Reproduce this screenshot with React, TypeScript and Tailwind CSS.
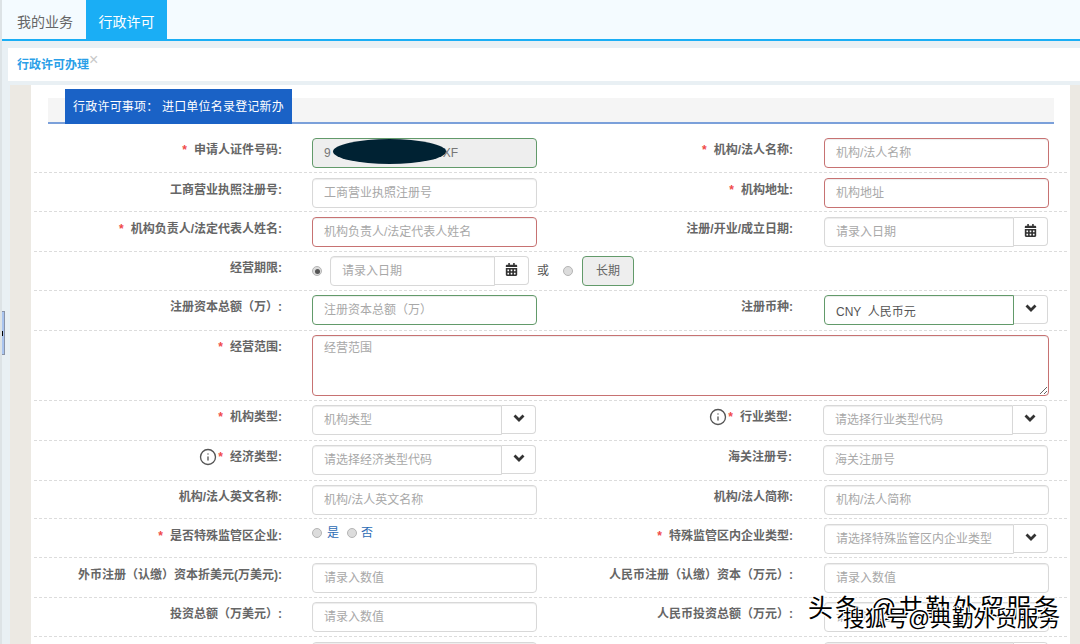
// App.tsx
import { FaCalendarAlt } from "react-icons/fa";
import { Info } from "lucide-react";

type Tone = "plain" | "red" | "green";

const toneClass: Record<Tone, string> = {
    plain: "border-[#d8d8d8]",
    red: "border-[#c77272]",
    green: "border-[#629a6a]",
};

function Star() {
    return <span className="mr-[7px] text-[#f04a4a]">*</span>;
}

function Radio({ checked = false }: { checked?: boolean }) {
    return (
        <span className="flex h-[10px] w-[10px] shrink-0 items-center justify-center rounded-full border border-[#b5b5b5] bg-[#dcdcdc]">
            {checked && <span className="h-[5px] w-[5px] rounded-full bg-[#555]" />}
        </span>
    );
}

function Chevron() {
    return (
        <svg width="12" height="8" viewBox="0 0 12 8" className="mb-[4px]">
            <polyline points="1.5,1.5 6,6 10.5,1.5" fill="none" stroke="#333" strokeWidth="2.8" />
        </svg>
    );
}

function Label({ text, required, info, className }: { text: string; required?: boolean; info?: boolean; className: string }) {
    return (
        <div className={`mt-[3px] flex h-[18px] shrink-0 items-center justify-end text-[12px] leading-[18px] font-bold whitespace-nowrap text-[#666] ${className}`}>
            {info && <Info size={18} strokeWidth={1.8} className="mr-[1px] text-[#555]" />}
            {required && <Star />}
            <span>{text}</span>
        </div>
    );
}

function TextInput({ placeholder, tone = "plain", className = "w-[225px]" }: { placeholder: string; tone?: Tone; className?: string }) {
    return (
        <input
            readOnly
            placeholder={placeholder}
            className={`h-[30px] shrink-0 rounded-[4px] border bg-white px-[11px] text-[12px] shadow-[inset_0_1px_1px_rgba(0,0,0,0.075)] outline-none placeholder:text-[#a8a8a8] ${toneClass[tone]} ${className}`}
        />
    );
}

function AddonInput({ placeholder, value, tone = "plain", kind, className = "w-[190px]" }: {
    placeholder: string;
    value?: string;
    tone?: Tone;
    kind: "date" | "select";
    className?: string;
}) {
    return (
        <div className="flex shrink-0 items-start">
            <input
                readOnly
                placeholder={placeholder}
                value={value}
                className={`h-[30px] rounded-l-[4px] border bg-white px-[11px] text-[12px] text-[#555] shadow-[inset_0_1px_1px_rgba(0,0,0,0.075)] outline-none placeholder:text-[#a8a8a8] ${toneClass[tone]} ${className}`}
            />
            <span className="flex h-[29px] w-[34px] items-center justify-center rounded-r-[4px] border border-l-0 border-[#d8d8d8] bg-white text-[#333]">
                {kind === "date" ? <FaCalendarAlt size={13} className="mb-[2px]" /> : <Chevron />}
            </span>
        </div>
    );
}

function Row({ className, children }: { className: string; children: React.ReactNode }) {
    return <div className={`flex items-start border-b border-dashed border-[#dcdcdc] ${className}`}>{children}</div>;
}

const left = "w-[248px]";
const right = "w-[256px]";
const gapLeft = <span className="w-[30px] shrink-0" />;
const gapRight = <span className="w-[31px] shrink-0" />;

export default function App() {
    return (
        <div className="relative h-[644px] w-[1080px] overflow-hidden border-l-2 border-[#dde3e6] bg-[#e9f0f4] font-['Liberation_Sans','Noto_Sans_CJK_SC',sans-serif]">
            {/* top nav */}
            <div className="-ml-[2px] flex h-[41px] border-b-2 border-[#1aaef5] bg-[#f4fbff] text-[14px]">
                <div className="flex w-[86px] items-center justify-center pt-[6px] pl-[4px] text-[#666]">我的业务</div>
                <div className="flex w-[81px] items-center justify-center bg-[#1aaef5] pt-[6px] text-white">行政许可</div>
            </div>

            {/* page tab */}
            <div className="mt-[7px] ml-[6px] flex h-[33px] items-center bg-white pl-[9px]">
                <span className="text-[12px] font-bold text-[#2a9fe8]">行政许可办理</span>
                <span className="mb-[10px] text-[16px] leading-none text-[#c8c8c8]">×</span>
            </div>

            <div className="mt-[4px] ml-[8px] flex h-[600px]">
                <div className="w-[21px] shrink-0 bg-[#ece9e3]" />
                <div className="w-[1039px] shrink-0 bg-white px-[3px]">
                    {/* section header */}
                    <div className="mr-[13px] ml-[14px] flex h-[39px] items-end">
                        <div className="h-[26px] w-full border-b-2 border-[#7ba0da] bg-[#f5f5f5] pl-[17px]">
                            <div className="-mt-[9px] flex h-[35px] w-[227px] items-center justify-center bg-[#1a62c6] text-[12px] tracking-[0.2px] whitespace-nowrap text-white">
                                行政许可事项： 进口单位名录登记新办
                            </div>
                        </div>
                    </div>

                    <div className="mt-[9px]">
                        <Row className="h-[40px] pt-[5px]">
                            <Label text="申请人证件号码:" required className={left} />
                            {gapLeft}
                            <div className="relative flex h-[30px] w-[225px] shrink-0 items-center justify-between rounded-[4px] border border-[#629a6a] bg-[#eeeeee] px-[11px] text-[12px] text-[#777]">
                                <span>9</span>
                                <span className="mr-[67px]">XF</span>
                                <span className="absolute top-0 left-[20px] h-[25px] w-[113px] rounded-[50%] bg-[#002233]" />
                            </div>
                            <Label text="机构/法人名称:" required className={right} />
                            {gapRight}
                            <TextInput placeholder="机构/法人名称" tone="red" />
                        </Row>
                        <Row className="h-[39px] pt-[5px]">
                            <Label text="工商营业执照注册号:" className={left} />
                            {gapLeft}
                            <TextInput placeholder="工商营业执照注册号" />
                            <Label text="机构地址:" required className={right} />
                            {gapRight}
                            <TextInput placeholder="机构地址" tone="red" />
                        </Row>
                        <Row className="h-[40px] pt-[5px]">
                            <Label text="机构负责人/法定代表人姓名:" required className={left} />
                            {gapLeft}
                            <TextInput placeholder="机构负责人/法定代表人姓名" tone="red" />
                            <Label text="注册/开业/成立日期:" className={right} />
                            {gapRight}
                            <AddonInput placeholder="请录入日期" kind="date" />
                        </Row>
                        <Row className="h-[39px] pt-[4px]">
                            <Label text="经营期限:" className={left} />
                            {gapLeft}
                            <div className="flex h-[30px] items-center">
                                <Radio checked />
                                <span className="w-[8px]" />
                                <AddonInput placeholder="请录入日期" kind="date" className="w-[165px]" />
                                <span className="mr-[14px] ml-[8px] text-[12px] text-[#555]">或</span>
                                <Radio />
                                <span className="ml-[9px] flex h-[30px] w-[52px] items-center justify-center rounded-[4px] border border-[#629a6a] bg-[#eeeeee] text-[12px] text-[#666]">长期</span>
                            </div>
                        </Row>
                        <Row className="h-[40px] pt-[4px]">
                            <Label text="注册资本总额（万）:" className={left} />
                            {gapLeft}
                            <TextInput placeholder="注册资本总额（万）" tone="green" />
                            <Label text="注册币种:" className={right} />
                            {gapRight}
                            <AddonInput placeholder="" value="CNY  人民币元" tone="green" kind="select" />
                        </Row>
                        <Row className="h-[70px] pt-[4px]">
                            <Label text="经营范围:" required className={left} />
                            {gapLeft}
                            <textarea
                                readOnly
                                placeholder="经营范围"
                                className="h-[61px] w-[737px] shrink-0 rounded-[4px] border border-[#c77272] bg-white px-[11px] py-[3px] text-[12px] shadow-[inset_0_1px_1px_rgba(0,0,0,0.075)] outline-none placeholder:text-[#a8a8a8]"
                            />
                        </Row>
                        <Row className="h-[40px] pt-[4px]">
                            <Label text="机构类型:" required className={left} />
                            {gapLeft}
                            <AddonInput placeholder="机构类型" kind="select" />
                            <Label text="行业类型:" required info className={right} />
                            {gapRight}
                            <AddonInput placeholder="请选择行业类型代码" kind="select" />
                        </Row>
                        <Row className="h-[40px] pt-[4px]">
                            <Label text="经济类型:" required info className={left} />
                            {gapLeft}
                            <AddonInput placeholder="请选择经济类型代码" kind="select" />
                            <Label text="海关注册号:" className={right} />
                            {gapRight}
                            <TextInput placeholder="海关注册号" />
                        </Row>
                        <Row className="h-[38px] pt-[4px]">
                            <Label text="机构/法人英文名称:" className={left} />
                            {gapLeft}
                            <TextInput placeholder="机构/法人英文名称" />
                            <Label text="机构/法人简称:" className={right} />
                            {gapRight}
                            <TextInput placeholder="机构/法人简称" />
                        </Row>
                        <Row className="h-[39px] pt-[5px]">
                            <Label text="是否特殊监管区企业:" required className={left} />
                            {gapLeft}
                            <div className="flex h-[18px] w-[225px] shrink-0 items-center text-[12px] text-[#2d6cb5]">
                                <Radio />
                                <span className="mr-[8px] ml-[5px]">是</span>
                                <Radio />
                                <span className="ml-[4px]">否</span>
                            </div>
                            <Label text="特殊监管区内企业类型:" required className={right} />
                            {gapRight}
                            <AddonInput placeholder="请选择特殊监管区内企业类型" kind="select" />
                        </Row>
                        <Row className="h-[40px] pt-[5px]">
                            <Label text="外币注册（认缴）资本折美元(万美元):" className={left} />
                            {gapLeft}
                            <TextInput placeholder="请录入数值" />
                            <Label text="人民币注册（认缴）资本（万元）:" className={right} />
                            {gapRight}
                            <TextInput placeholder="请录入数值" />
                        </Row>
                        <Row className="h-[39px] pt-[4px]">
                            <Label text="投资总额（万美元）:" className={left} />
                            {gapLeft}
                            <TextInput placeholder="请录入数值" />
                            <Label text="人民币投资总额（万元）:" className={right} />
                            {gapRight}
                            <TextInput placeholder="请录入数值" />
                        </Row>
                        <Row className="h-[40px] pt-[5px]">
                            <span className="w-[278px] shrink-0" />
                            <TextInput placeholder="" />
                            <span className="w-[287px] shrink-0" />
                            <AddonInput placeholder="" kind="select" />
                        </Row>
                    </div>
                </div>
                <div className="w-[10px] shrink-0 bg-[#ece9e3]" />
            </div>

            {/* sidebar toggle */}
            <div className="absolute top-[311px] -left-[2px] flex h-[44px] w-[5px] items-center border border-l-0 border-[#8a94a8] bg-[#a9c4ef]">
                <span className="h-[5px] w-[3px] bg-black" />
            </div>

            {/* watermarks, the reference has two of them stamped over each other */}
            <div className="absolute top-[592px] left-[806px] text-[25px] leading-[32px] tracking-[2px] whitespace-nowrap text-black [text-shadow:1px_1px_0_#fff,-1px_-1px_0_#fff,1px_-1px_0_#fff,-1px_1px_0_#fff]">
                头条 @共勤外贸服务
            </div>
            <div className="absolute top-[604px] left-[841px] text-[21.7px] leading-[30px] whitespace-nowrap text-black [text-shadow:1px_1px_0_#fff,-1px_-1px_0_#fff,1px_-1px_0_#fff,-1px_1px_0_#fff]">
                搜狐号@典勤外贸服务
            </div>
        </div>
    );
}
